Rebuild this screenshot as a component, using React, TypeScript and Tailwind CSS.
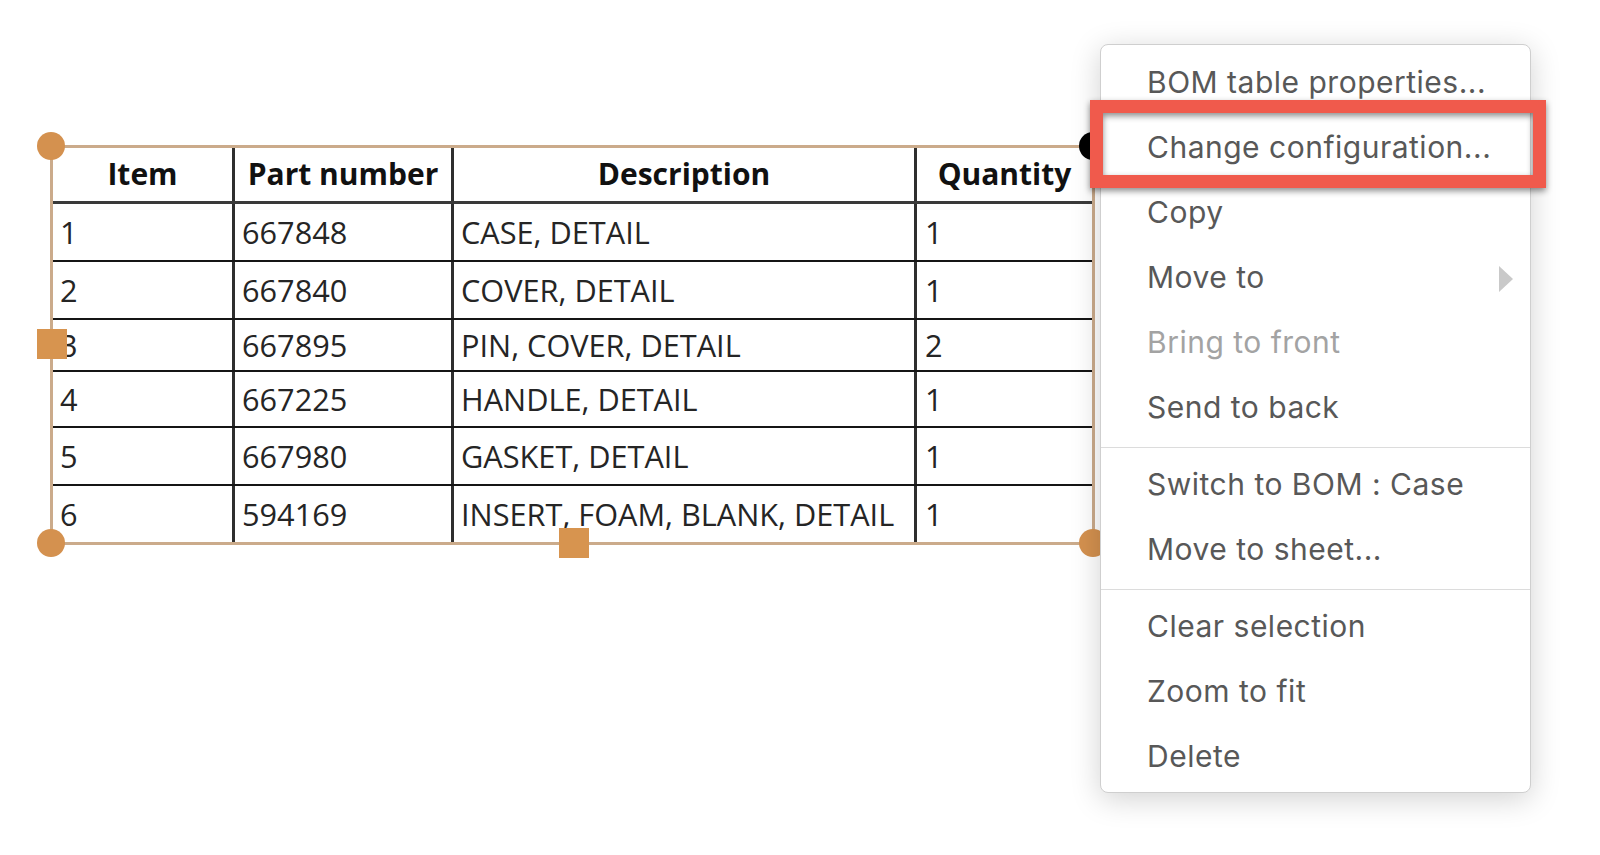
import React from "react";

const rows: { c: string[]; h: string; last?: boolean }[] = [
  { c: ["1", "667848", "CASE, DETAIL", "1"], h: "h-[58px]" },
  { c: ["2", "667840", "COVER, DETAIL", "1"], h: "h-[58px]" },
  { c: ["3", "667895", "PIN, COVER, DETAIL", "2"], h: "h-[52px]" },
  { c: ["4", "667225", "HANDLE, DETAIL", "1"], h: "h-[56px]" },
  { c: ["5", "667980", "GASKET, DETAIL", "1"], h: "h-[58px]" },
  { c: ["6", "594169", "INSERT, FOAM, BLANK, DETAIL", "1"], h: "h-[56px]", last: true },
];

type MenuEntry = { label: string; disabled?: boolean; sub?: boolean } | "sep";

const menu: MenuEntry[] = [
  { label: "BOM table properties..." },
  { label: "Change configuration..." },
  { label: "Copy" },
  { label: "Move to", sub: true },
  { label: "Bring to front", disabled: true },
  { label: "Send to back" },
  "sep",
  { label: "Switch to BOM : Case" },
  { label: "Move to sheet..." },
  "sep",
  { label: "Clear selection" },
  { label: "Zoom to fit" },
  { label: "Delete" },
];

const cols = "grid grid-cols-[182px_219px_463px_175px]";

export default function App() {
  return (
    <div className="relative w-[1600px] h-[855px] bg-white overflow-hidden">
      {/* BOM table inside selection frame */}
      <div className="pt-[145px] pl-[50px]">
        <div className="w-[1045px] h-[400px] border-[3px] border-[#cbab8b] overflow-hidden font-['Open_Sans',sans-serif] text-[30px] leading-none">
          <div className={`${cols} h-[56px] border-b-[3px] border-[#3a3a3a] font-bold text-[#111]`}>
            <div className="flex items-center justify-center pb-[2px] border-r-[3px] border-[#2e2e2e]">Item</div>
            <div className="flex items-center justify-center pb-[2px] border-r-[3px] border-[#2e2e2e]">Part number</div>
            <div className="flex items-center justify-center pb-[2px] border-r-[3px] border-[#2e2e2e]">Description</div>
            <div className="flex items-center justify-center pb-[2px]">Quantity</div>
          </div>
          {rows.map((r) => (
            <div
              key={r.c[0]}
              className={`${cols} ${r.h} ${r.last ? "" : "border-b-2 border-[#151515]"} text-[#252525] text-[30.7px]`}
            >
              <div className="flex items-center pl-[7px] border-r-[3px] border-[#2e2e2e]">{r.c[0]}</div>
              <div className="flex items-center pl-[7px] border-r-[3px] border-[#2e2e2e]">{r.c[1]}</div>
              <div className="flex items-center pl-[7px] border-r-[3px] border-[#2e2e2e]">{r.c[2]}</div>
              <div className="flex items-center pl-[8px]">{r.c[3]}</div>
            </div>
          ))}
        </div>
      </div>

      {/* selection handles */}
      <div className="absolute left-[37px] top-[132px] w-[28px] h-[28px] rounded-full bg-[#d4914f]" />
      <div className="absolute left-[37px] top-[529px] w-[28px] h-[28px] rounded-full bg-[#d4914f]" />
      <div className="absolute left-[1079px] top-[529px] w-[28px] h-[28px] rounded-full bg-[#d4914f]" />
      <div className="absolute left-[1079px] top-[132px] w-[28px] h-[28px] rounded-full bg-black" />
      <div className="absolute left-[37px] top-[329px] w-[30px] h-[30px] bg-[#d7944f]" />
      <div className="absolute left-[559px] top-[528px] w-[30px] h-[30px] bg-[#d7944f]" />

      {/* context menu */}
      <div className="absolute left-[1100px] top-[44px] w-[431px] pt-[6px] pb-[2px] bg-white border border-[#cfcfcf] rounded-[8px] shadow-[0_6px_30px_rgba(0,0,0,0.18)] font-['Inter',sans-serif] text-[30px] leading-none">
        {menu.map((m, i) =>
          m === "sep" ? (
            <div key={i} className="h-[12px] flex items-center">
              <div className="w-full h-px bg-[#dcdcdc]" />
            </div>
          ) : (
            <div
              key={i}
              className={`relative h-[65px] flex items-center pl-[46px] pb-[3px] tracking-[0.5px] ${
                m.disabled ? "text-[#a3a3a3]" : "text-[#585858]"
              }`}
            >
              {m.label}
              {m.sub && (
                <svg className="absolute left-[398px] top-[20px]" width="14" height="26" viewBox="0 0 14 26">
                  <polygon points="0,0 14,13 0,26" fill="#c9c9c9" />
                </svg>
              )}
            </div>
          )
        )}
      </div>

      {/* red annotation box */}
      <div className="absolute left-[1090px] top-[100px] w-[456px] h-[88px] border-[13px] border-[#f05a4c] drop-shadow-[0_3px_3px_rgba(0,0,0,0.45)]" />
    </div>
  );
}
